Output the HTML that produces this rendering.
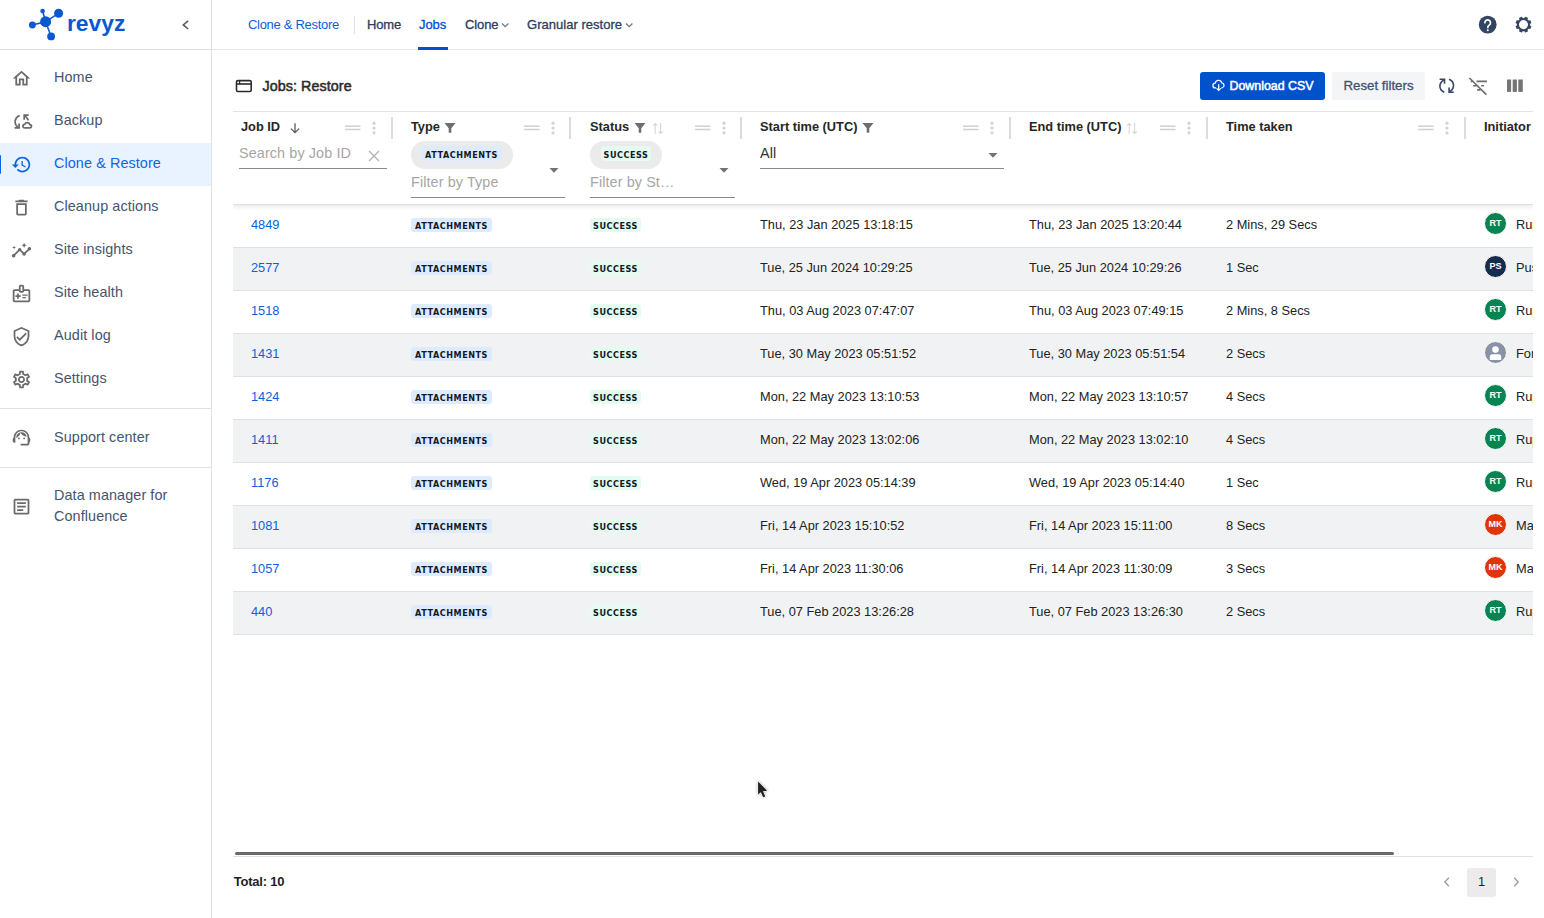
<!DOCTYPE html>
<html lang="en">
<head>
<meta charset="utf-8">
<title>Jobs: Restore</title>
<style>
*{box-sizing:border-box;margin:0;padding:0}
html,body{width:1544px;height:918px;overflow:hidden;background:#fff}
body{font-family:"Liberation Sans",sans-serif;color:#172b4d;position:relative}
.abs{position:absolute}
/* sidebar */
#side{position:absolute;left:0;top:0;width:212px;height:918px;border-right:1px solid #e0e0e0;background:#fff}
#logo{position:absolute;left:0;top:0;width:211px;height:50px;border-bottom:1px solid #e0e0e0}
.nav{position:absolute;left:0;width:211px;height:43px}
.nav .t{position:absolute;left:54px;top:0;line-height:41px;font-size:14.4px;color:#44546f;white-space:nowrap;letter-spacing:.09px}
.nav svg{position:absolute;left:10.8px;top:11px;width:21px;height:21px}
.nav.on{background:#e9f2ff}
.nav.on .t{color:#0c66e4}
.nav.on:before{content:"";position:absolute;left:0;top:12px;width:1.3px;height:19px;background:#0c66e4;border-radius:0 1px 1px 0}
.hr{position:absolute;left:0;width:211px;height:1px;background:#e0e0e0}
/* top */
#top{position:absolute;left:212px;top:0;right:0;height:50px;border-bottom:1px solid #e4e6ea;background:#fff}
.tn{position:absolute;top:0;line-height:50px;font-size:13px;white-space:nowrap;color:#2c3e5d;-webkit-text-stroke:.3px}

/* page head */
#ttl{position:absolute;left:262.5px;top:74px;line-height:24px;font-size:14.3px;font-weight:400;-webkit-text-stroke:.5px #2b2b2b;letter-spacing:.08px;color:#2b2b2b;white-space:nowrap}
.btn{position:absolute;top:72px;height:28px;border-radius:3px;font-size:12.6px;line-height:28px;white-space:nowrap}
/* table */
#hdr:before{content:"";position:absolute;left:0;top:0;width:100%;height:1px;background:#e2e3e8}
#tbl{position:absolute;left:233px;top:111px;width:1300px;height:746px;overflow:hidden}
#hdr{position:absolute;left:0;top:0;width:1300px;height:94px;background:#fff;border-bottom:1px solid #e0e0e0;box-shadow:0 2px 5px rgba(0,0,0,.09);z-index:2}
.hl{position:absolute;top:8px;line-height:16px;font-size:12.8px;font-weight:700;color:#262626;white-space:nowrap}
.sep{position:absolute;top:6px;width:2px;height:22px;background:#dcdcdc}
.ph{position:absolute;font-size:14.4px;color:#a6a6a6;white-space:nowrap;line-height:18px;letter-spacing:.1px}
.ul{position:absolute;height:1px;background:#8a8a8a}
.chip{position:absolute;top:30px;height:28px;border-radius:14px;background:#ebebeb}
.loz{position:absolute;height:14px;border-radius:3px;font-family:"DejaVu Sans","Liberation Sans",sans-serif;font-size:8.1px;font-weight:700;line-height:17px;color:#111827;text-align:center;letter-spacing:.55px;white-space:nowrap}
.loz.b{background:#deebff}
.loz.g{background:#e3fcef}
.row{position:absolute;left:0;width:1300px;height:43px;border-bottom:1px solid #e0e0e0;font-size:12.8px;color:#222;line-height:42px;white-space:nowrap}
.row.alt{background:#f1f2f4}
.row span{position:absolute;top:-1px}
.row .id{left:18px;color:#0c5fe0}
.row .st{left:527px}
.row .en{left:796px}
.row .tk{left:993px}
.row .nm{left:1283px}
.row .loz{top:13px}
.av{position:absolute;left:1251px;top:7px;width:23px;height:23px;border-radius:50%;border:1px solid #fff;color:#fff;font-size:9px;font-weight:700;text-align:center;line-height:21px;letter-spacing:0}
.av.rt{background:#078451}.av.ps{background:#172b4d}.av.mk{background:#de350b}.av.fu{background:#8993a5}
</style>
</head>
<body>
<div id="side">
 <div id="logo"><svg class="abs" style="left:26px;top:6px" width="40" height="38" viewBox="26 6 40 38"><g fill="#0b57d0" stroke="#0b57d0"><g stroke-width="1.500"><line x1="45.600" y1="21.700" x2="58.600" y2="13.300"/><line x1="45.600" y1="21.700" x2="32.400" y2="25"/><line x1="45.600" y1="21.700" x2="51.100" y2="36.400"/><line x1="45.600" y1="21.700" x2="42.600" y2="11"/></g><g stroke="none"><circle cx="45.600" cy="21.700" r="5.500"/><circle cx="58.600" cy="13.300" r="4.500"/><circle cx="32.400" cy="25" r="3.400"/><circle cx="51.100" cy="36.400" r="3.900"/><circle cx="42.600" cy="11" r="2.300"/></g></g></svg>
  <span class="abs" style="left:67px;top:9.4px;font-size:22.8px;font-weight:700;line-height:28px;color:#0b57d0;letter-spacing:0">revyz</span>
  <svg class="abs" style="left:176px;top:15px" width="18" height="18" viewBox="0 0 18 18"><path d="M12.200 5.800 7.300 9.900l4.900 4.100" fill="none" stroke="#5a5a5a" stroke-width="1.600"/></svg></div>
 <div class="nav" style="top:57px"><svg viewBox="0 0 24 24" fill="#6a6a6a" color="#6a6a6a"><path d="M12 5.69l5 4.5V18h-2v-6H9v6H7v-7.81l5-4.5M12 3L2 12h3v8h6v-6h2v6h6v-8h3L12 3z"/></svg><span class="t">Home</span></div>
 <div class="nav" style="top:100px"><svg style="left:4px;top:4px;width:40px;height:32px" viewBox="4 104 40 32"><g fill="none" stroke="#6a6a6a" stroke-width="1.750"><path d="M19.600 115.600C14.300 117.600 13.600 124.300 18.200 127.200"/><path d="M14.600 127.900h4.500v-4.500"/><path d="M28.700 115.200h-4.500v4.600"/><path d="M24.600 115.600C26.500 117 27.700 118.600 28.400 120.400"/><path d="M25 127.900c-2.600 0-2.800-3.300-.2-3.600.9-2.600 4.600-2.200 5 .4 2.400.2 2.100 3.200-.1 3.200z" stroke-linejoin="round"/></g></svg><span class="t">Backup</span></div>
 <div class="nav on" style="top:143px"><svg viewBox="0 0 24 24" fill="#0c66e4" color="#0c66e4"><path d="M13 3c-4.970 0-9 4.030-9 9H1l3.890 3.890.07.14L9 12H6c0-3.870 3.130-7 7-7s7 3.130 7 7-3.130 7-7 7c-1.930 0-3.680-.79-4.940-2.060l-1.420 1.420C8.270 19.990 10.510 21 13 21c4.970 0 9-4.030 9-9s-4.030-9-9-9zm-1 5v5l4.280 2.540.72-1.210-3.500-2.080V8H12z"/></svg><span class="t">Clone &amp; Restore</span></div>
 <div class="nav" style="top:186px"><svg viewBox="0 0 24 24" fill="#6a6a6a" color="#6a6a6a"><path d="M6 19c0 1.100.9 2 2 2h8c1.100 0 2-.9 2-2V7H6v12zM8 9h8v10H8V9zm7.500-5l-1-1h-5l-1 1H5v2h14V4z"/></svg><span class="t">Cleanup actions</span></div>
 <div class="nav" style="top:229px"><svg viewBox="0 0 24 24" fill="#6a6a6a" color="#6a6a6a"><path d="M21 8c-1.450 0-2.260 1.440-1.930 2.510l-3.550 3.560c-.3-.09-.74-.09-1.040 0l-2.550-2.550C12.270 10.450 11.460 9 10 9c-1.450 0-2.270 1.440-1.930 2.520l-4.560 4.550C2.440 15.740 1 16.550 1 18c0 1.100.9 2 2 2 1.450 0 2.260-1.440 1.930-2.510l4.550-4.560c.3.090.74.090 1.040 0l2.550 2.550C12.730 16.550 13.540 18 15 18c1.450 0 2.270-1.440 1.930-2.520l3.560-3.550c1.070.33 2.510-.48 2.510-1.930 0-1.100-.9-2-2-2z"/><path d="M15 9l.94-2.070L18 6l-2.060-.93L15 3l-.92 2.070L12 6l2.080.93z"/><path d="M3.500 11L4 9l2-.5L4 8l-.5-2L3 8l-2 .5L3 9z"/></svg><span class="t">Site insights</span></div>
 <div class="nav" style="top:272px"><svg viewBox="0 0 24 24" fill="#6a6a6a" color="#6a6a6a"><path d="M20 7h-5V4c0-1.100-.9-2-2-2h-2c-1.100 0-2 .9-2 2v3H4c-1.100 0-2 .9-2 2v11c0 1.100.9 2 2 2h16c1.100 0 2-.9 2-2V9c0-1.100-.9-2-2-2zm-9-3h2v5h-2V4zm9 16H4V9h5c0 1.100.9 2 2 2h2c1.100 0 2-.9 2-2h5v11z"/><path d="M11 16H9v2H7v-2H5v-2h2v-2h2v2h2v2zM13 14.500V13h6v1.500h-6zM13 17.500V16h4v1.500h-4z"/></svg><span class="t">Site health</span></div>
 <div class="nav" style="top:315px"><svg viewBox="0 0 24 24" fill="#6a6a6a" color="#6a6a6a"><path d="M12 1L3 5v6c0 5.550 3.840 10.740 9 12 5.160-1.260 9-6.450 9-12V5l-9-4zm7 10c0 4.520-2.980 8.690-7 9.930-4.020-1.240-7-5.410-7-9.930V6.300l7-3.110 7 3.110V11zm-11.590.59L6 13l4 4 8-8-1.410-1.420L10 14.170z"/></svg><span class="t">Audit log</span></div>
 <div class="nav" style="top:358px"><svg viewBox="0 0 24 24" fill="#6a6a6a" color="#6a6a6a"><path d="M19.430 12.980c.04-.32.07-.64.07-.98 0-.34-.03-.66-.07-.98l2.110-1.650c.19-.15.24-.42.12-.64l-2-3.460c-.09-.16-.26-.25-.44-.25-.06 0-.12.010-.17.030l-2.490 1c-.52-.4-1.080-.73-1.690-.98l-.38-2.650C14.460 2.180 14.250 2 14 2h-4c-.25 0-.46.18-.49.42l-.38 2.650c-.61.25-1.170.59-1.690.98l-2.490-1c-.06-.02-.12-.03-.18-.03-.17 0-.34.090-.43.250l-2 3.460c-.13.22-.07.49.12.64l2.110 1.650c-.04.32-.07.65-.07.980 0 .33.030.66.070.98l-2.110 1.650c-.19.15-.24.42-.12.64l2 3.460c.09.16.26.25.44.25.06 0 .12-.01.17-.03l2.490-1c.52.4 1.080.73 1.690.98l.38 2.650c.03.24.24.42.49.42h4c.25 0 .46-.18.49-.42l.38-2.650c.61-.25 1.170-.59 1.690-.98l2.490 1c.06.020.12.030.18.030.17 0 .34-.09.43-.25l2-3.460c.12-.22.07-.49-.12-.64l-2.110-1.650zm-1.980-1.710c.04.31.05.52.05.73 0 .21-.02.43-.05.73l-.14 1.130.89.7 1.080.84-.7 1.210-1.270-.51-1.040-.42-.9.68c-.43.32-.84.56-1.250.73l-1.060.43-.16 1.130-.2 1.350h-1.400l-.19-1.350-.16-1.130-1.060-.43c-.43-.18-.83-.41-1.230-.71l-.91-.7-1.060.43-1.270.51-.7-1.210 1.080-.84.89-.7-.14-1.130c-.03-.31-.05-.54-.05-.74s.02-.43.05-.73l.14-1.130-.89-.7-1.080-.84.7-1.210 1.270.51 1.040.42.9-.68c.43-.32.84-.56 1.250-.73l1.060-.43.16-1.130.2-1.350h1.390l.19 1.350.16 1.130 1.060.43c.43.18.83.41 1.230.71l.91.7 1.060-.43 1.270-.51.7 1.210-1.070.85-.89.7.14 1.130zM12 8c-2.210 0-4 1.790-4 4s1.790 4 4 4 4-1.790 4-4-1.790-4-4-4zm0 6c-1.100 0-2-.9-2-2s.9-2 2-2 2 .9 2 2-.9 2-2 2z"/></svg><span class="t">Settings</span></div>
 <div class="nav" style="top:417px"><svg style="top:10px" viewBox="0 0 24 24" fill="#6a6a6a" color="#6a6a6a"><path d="M21 12.220C21 6.730 16.740 3 12 3c-4.690 0-9 3.650-9 9.280-.6.340-1 .98-1 1.720v2c0 1.100.9 2 2 2h1v-6.100c0-3.870 3.130-7 7-7s7 3.130 7 7V19h-8v2h8c1.100 0 2-.9 2-2v-1.220c.59-.31 1-.92 1-1.640v-2.300c0-.7-.41-1.310-1-1.620z"/><circle cx="9" cy="13" r="1"/><circle cx="15" cy="13" r="1"/><path d="M18 11.030C17.520 8.180 15.040 6 12.050 6c-3.030 0-6.290 2.510-6.030 6.450 2.470-1.010 4.330-3.210 4.860-5.890 1.310 2.630 4 4.440 7.120 4.470z"/></svg><span class="t">Support center</span></div>
 <div class="hr" style="top:408px"></div>
 <div class="hr" style="top:467px"></div>
 <div class="nav" style="top:475px;height:62px"><svg viewBox="0 0 24 24" fill="#6a6a6a" style="top:21px"><path d="M19 5v14H5V5h14m0-2H5c-1.100 0-2 .9-2 2v14c0 1.100.9 2 2 2h14c1.100 0 2-.9 2-2V5c0-1.100-.9-2-2-2z"/><path d="M14 17H7v-2h7v2zm3-4H7v-2h10v2zm0-4H7V7h10v2z"/></svg><span class="t" style="line-height:21px;top:10px;white-space:normal;width:140px">Data manager for Confluence</span></div>

</div>
<div id="top">
 <span class="tn" style="left:36px;color:#0c5fd6;letter-spacing:-.3px;-webkit-text-stroke:0">Clone &amp; Restore</span>
 <div class="abs" style="left:142px;top:16px;width:1px;height:18px;background:#dcdfe4"></div>
 <span class="tn" style="left:155px;letter-spacing:-.15px">Home</span>
 <span class="tn" style="left:207px;color:#0052cc;letter-spacing:-.1px">Jobs</span>
 <div class="abs" style="left:206px;top:47px;width:30px;height:3px;background:#0052cc"></div>
 <span class="tn" style="left:253px;letter-spacing:-.1px">Clone</span>
 <svg class="abs" style="left:288px;top:20px" width="10" height="10" viewBox="0 0 10 10"><path d="M2 3.500 5.200 6.700 8.400 3.500" fill="none" stroke="#6b778c" stroke-width="1.300"/></svg>
 <span class="tn" style="left:315px;letter-spacing:.03px">Granular restore</span>
 <svg class="abs" style="left:412px;top:20px" width="10" height="10" viewBox="0 0 10 10"><path d="M2 3.500 5.200 6.700 8.400 3.500" fill="none" stroke="#6b778c" stroke-width="1.300"/></svg>
 <svg class="abs" style="left:1252px;top:4px" width="80" height="40" viewBox="1464 4 80 40"><circle cx="1487.700" cy="24.600" r="8.900" fill="#344563"/><g fill="none" stroke="#fff" stroke-width="1.700" stroke-linecap="round"><path d="M1484.900 22.700a2.800 2.800 0 1 1 4.300 2.400c-.9.600-1.400 1.100-1.400 2.300"/></g><circle cx="1487.750" cy="30.300" r="1.050" fill="#fff"/><circle cx="1523.500" cy="24.600" r="5.600" fill="none" stroke="#344563" stroke-width="2.100"/><g fill="#344563"><rect x="-1.700" y="-8" width="3.400" height="2.600" rx=".5" transform="translate(1523.500 24.600) rotate(22.5)"/><rect x="-1.700" y="-8" width="3.400" height="2.600" rx=".5" transform="translate(1523.500 24.600) rotate(67.5)"/><rect x="-1.700" y="-8" width="3.400" height="2.600" rx=".5" transform="translate(1523.500 24.600) rotate(112.5)"/><rect x="-1.700" y="-8" width="3.400" height="2.600" rx=".5" transform="translate(1523.500 24.600) rotate(157.5)"/><rect x="-1.700" y="-8" width="3.400" height="2.600" rx=".5" transform="translate(1523.500 24.600) rotate(202.5)"/><rect x="-1.700" y="-8" width="3.400" height="2.600" rx=".5" transform="translate(1523.500 24.600) rotate(247.5)"/><rect x="-1.700" y="-8" width="3.400" height="2.600" rx=".5" transform="translate(1523.500 24.600) rotate(292.5)"/><rect x="-1.700" y="-8" width="3.400" height="2.600" rx=".5" transform="translate(1523.500 24.600) rotate(337.5)"/></g></svg>
</div>
<div id="main">
 <svg class="abs" style="left:235px;top:78.500px" width="18" height="14" viewBox="0 0 18 14"><g fill="none" stroke="#2b2b2b" stroke-width="1.600"><rect x="1.500" y="1.600" width="14.700" height="10.900" rx="1.400"/><path d="M1.500 5h14.700"/><path d="M4.600 1.600v3.400" stroke-width="1.300"/></g></svg>
 <span id="ttl">Jobs: Restore</span>
 <div class="btn" style="left:1200px;width:125px;background:#0052cc;color:#fff;font-size:12.400px;-webkit-text-stroke:.5px #fff">
  <svg class="abs" style="left:11.600px;top:7.300px" width="13.400" height="13.400" viewBox="0 0 14 14"><path d="M4.300 9.300H3.600a2.500 2.500 0 0 1-.3-5 3.600 3.600 0 0 1 7-.3 2.700 2.700 0 0 1 .2 5.300H9.700" fill="none" stroke="#fff" stroke-width="1.300"/><path d="M7 5.500v6.300M4.800 9.800 7 12l2.200-2.200" fill="none" stroke="#fff" stroke-width="1.300"/></svg>
  <span class="abs" style="left:29.500px;top:0;letter-spacing:0">Download CSV</span></div>
 <div class="btn" style="left:1332px;width:93px;background:#f4f5f7;color:#42526e;text-align:center;letter-spacing:0;font-size:13.300px;-webkit-text-stroke:.3px #42526e">Reset filters</div>
 <svg class="abs" style="left:1430px;top:66px" width="104" height="40" viewBox="1430 66 104 40"><g fill="none" stroke="#344563" stroke-width="1.600"><path d="M1444.300 92.300C1438.400 89.500 1438.600 83.200 1443.800 79.800"/><path d="M1439.600 79.300h4.900v4.500"/><path d="M1449.100 79.200C1455 82 1454.800 88.300 1449.700 91.700"/><path d="M1453.700 92.200h-4.600v-4.700"/></g><g fill="none" stroke="#6b6b6b" stroke-width="1.600"><path d="M1469.400 78 1486.400 94.600"/><path d="M1470.800 81.400h1.500M1476.500 81.400h10.400M1473.100 85.700h4.100M1481.200 85.700h2.700M1477.200 89.900h3.300"/></g><g fill="#757575"><rect x="1507" y="79.500" width="4.100" height="12.400"/><rect x="1512.700" y="79.500" width="4.200" height="12.400"/><rect x="1518.300" y="79.500" width="4.500" height="12.400"/></g></svg>
 <div id="tbl">
  <div id="hdr"><span class="hl" style="left:8px">Job ID</span><svg class="abs" style="left:55px;top:10px" width="14" height="14" viewBox="0 0 14 14"><path d="M7 2.200v9.300M2.900 7.600 7 11.700 11.100 7.600" fill="none" stroke="#5c5c5c" stroke-width="1.300"/></svg><svg class="abs" style="left:112px;top:12px" width="16" height="10" viewBox="0 0 16 10"><path d="M0 3.200h15.500M0 6.600h15.500" stroke="#d0d0d0" stroke-width="1.500" fill="none"/></svg><svg class="abs" style="left:139px;top:10px" width="4" height="14" viewBox="0 0 4 14"><g fill="#d3d3d3"><circle cx="2" cy="2.200" r="1.600"/><circle cx="2" cy="7" r="1.600"/><circle cx="2" cy="11.800" r="1.600"/></g></svg><div class="sep" style="left:158px"></div><span class="ph" style="left:6px;top:33px">Search by Job ID</span><div class="ul" style="left:6px;top:57px;width:148px"></div><svg class="abs" style="left:135px;top:39px" width="12" height="12" viewBox="0 0 12 12"><path d="M1 1l10 10M11 1 1 11" stroke="#b2b2b2" stroke-width="1.300" fill="none"/></svg><span class="hl" style="left:178px">Type</span><svg class="abs" style="left:211px;top:11px" width="12" height="12" viewBox="0 0 12 12"><path d="M.5 1h11L7.300 6.200v4.600H4.700V6.200z" fill="#6e6e6e"/></svg><svg class="abs" style="left:291px;top:12px" width="16" height="10" viewBox="0 0 16 10"><path d="M0 3.200h15.500M0 6.600h15.500" stroke="#d0d0d0" stroke-width="1.500" fill="none"/></svg><svg class="abs" style="left:318px;top:10px" width="4" height="14" viewBox="0 0 4 14"><g fill="#d3d3d3"><circle cx="2" cy="2.200" r="1.600"/><circle cx="2" cy="7" r="1.600"/><circle cx="2" cy="11.800" r="1.600"/></g></svg><div class="sep" style="left:336px"></div><div class="chip" style="left:178px;width:102px"><div class="loz b" style="left:10px;top:5px;width:81px;height:15px;line-height:18px">ATTACHMENTS</div></div><span class="ph" style="left:178px;top:62px">Filter by Type</span><div class="ul" style="left:178px;top:86px;width:154px"></div><svg class="abs" style="left:316px;top:56px" width="10" height="7" viewBox="0 0 10 7"><path d="M.5 1h9L5 5.800z" fill="#737373"/></svg><span class="hl" style="left:357px">Status</span><svg class="abs" style="left:401px;top:11px" width="12" height="12" viewBox="0 0 12 12"><path d="M.5 1h11L7.300 6.200v4.600H4.700V6.200z" fill="#6e6e6e"/></svg><svg class="abs" style="left:419px;top:11px" width="12" height="12" viewBox="0 0 12 12"><g fill="none" stroke="#d6d6d6" stroke-width="1.100"><path d="M3.200 11.800V1.500M1 3.700 3.200 1.500 5.400 3.700"/><path d="M8.600 1v10.500M6.400 9.300 8.600 11.500 10.800 9.300"/></g></svg><svg class="abs" style="left:462px;top:12px" width="16" height="10" viewBox="0 0 16 10"><path d="M0 3.200h15.500M0 6.600h15.500" stroke="#d0d0d0" stroke-width="1.500" fill="none"/></svg><svg class="abs" style="left:489px;top:10px" width="4" height="14" viewBox="0 0 4 14"><g fill="#d3d3d3"><circle cx="2" cy="2.200" r="1.600"/><circle cx="2" cy="7" r="1.600"/><circle cx="2" cy="11.800" r="1.600"/></g></svg><div class="sep" style="left:507px"></div><div class="chip" style="left:357px;width:72px"><div class="loz g" style="left:11px;top:5px;width:50px;height:15px;line-height:18px">SUCCESS</div></div><span class="ph" style="left:357px;top:62px">Filter by St…</span><div class="ul" style="left:357px;top:86px;width:145px"></div><svg class="abs" style="left:486px;top:56px" width="10" height="7" viewBox="0 0 10 7"><path d="M.5 1h9L5 5.800z" fill="#737373"/></svg><span class="hl" style="left:527px">Start time (UTC)</span><svg class="abs" style="left:629px;top:11px" width="12" height="12" viewBox="0 0 12 12"><path d="M.5 1h11L7.300 6.200v4.600H4.700V6.200z" fill="#6e6e6e"/></svg><svg class="abs" style="left:730px;top:12px" width="16" height="10" viewBox="0 0 16 10"><path d="M0 3.200h15.500M0 6.600h15.500" stroke="#d0d0d0" stroke-width="1.500" fill="none"/></svg><svg class="abs" style="left:757px;top:10px" width="4" height="14" viewBox="0 0 4 14"><g fill="#d3d3d3"><circle cx="2" cy="2.200" r="1.600"/><circle cx="2" cy="7" r="1.600"/><circle cx="2" cy="11.800" r="1.600"/></g></svg><div class="sep" style="left:776px"></div><span class="ph" style="left:527px;top:33px;color:#333">All</span><div class="ul" style="left:527px;top:57px;width:244px"></div><svg class="abs" style="left:755px;top:41px" width="10" height="7" viewBox="0 0 10 7"><path d="M.5 1h9L5 5.800z" fill="#737373"/></svg><span class="hl" style="left:796px">End time (UTC)</span><svg class="abs" style="left:893px;top:11px" width="12" height="12" viewBox="0 0 12 12"><g fill="none" stroke="#d6d6d6" stroke-width="1.100"><path d="M3.200 11.800V1.500M1 3.700 3.200 1.500 5.400 3.700"/><path d="M8.600 1v10.500M6.400 9.300 8.600 11.500 10.800 9.300"/></g></svg><svg class="abs" style="left:927px;top:12px" width="16" height="10" viewBox="0 0 16 10"><path d="M0 3.200h15.500M0 6.600h15.500" stroke="#d0d0d0" stroke-width="1.500" fill="none"/></svg><svg class="abs" style="left:954px;top:10px" width="4" height="14" viewBox="0 0 4 14"><g fill="#d3d3d3"><circle cx="2" cy="2.200" r="1.600"/><circle cx="2" cy="7" r="1.600"/><circle cx="2" cy="11.800" r="1.600"/></g></svg><div class="sep" style="left:973px"></div><span class="hl" style="left:993px">Time taken</span><svg class="abs" style="left:1185px;top:12px" width="16" height="10" viewBox="0 0 16 10"><path d="M0 3.200h15.500M0 6.600h15.500" stroke="#d0d0d0" stroke-width="1.500" fill="none"/></svg><svg class="abs" style="left:1212px;top:10px" width="4" height="14" viewBox="0 0 4 14"><g fill="#d3d3d3"><circle cx="2" cy="2.200" r="1.600"/><circle cx="2" cy="7" r="1.600"/><circle cx="2" cy="11.800" r="1.600"/></g></svg><div class="sep" style="left:1231px"></div><span class="hl" style="left:1251px">Initiator</span></div>
  <div class="row" style="top:94px"><span class="id">4849</span><div class="loz b" style="left:178px;width:81px">ATTACHMENTS</div><div class="loz g" style="left:357px;width:51px">SUCCESS</div><span class="st">Thu, 23 Jan 2025 13:18:15</span><span class="en">Thu, 23 Jan 2025 13:20:44</span><span class="tk">2 Mins, 29 Secs</span><div class="av rt">RT</div><span class="nm">Rupesh T</span></div>
  <div class="row alt" style="top:137px"><span class="id">2577</span><div class="loz b" style="left:178px;width:81px">ATTACHMENTS</div><div class="loz g" style="left:357px;width:51px">SUCCESS</div><span class="st">Tue, 25 Jun 2024 10:29:25</span><span class="en">Tue, 25 Jun 2024 10:29:26</span><span class="tk">1 Sec</span><div class="av ps">PS</div><span class="nm">Pushkar S</span></div>
  <div class="row" style="top:180px"><span class="id">1518</span><div class="loz b" style="left:178px;width:81px">ATTACHMENTS</div><div class="loz g" style="left:357px;width:51px">SUCCESS</div><span class="st">Thu, 03 Aug 2023 07:47:07</span><span class="en">Thu, 03 Aug 2023 07:49:15</span><span class="tk">2 Mins, 8 Secs</span><div class="av rt">RT</div><span class="nm">Rupesh T</span></div>
  <div class="row alt" style="top:223px"><span class="id">1431</span><div class="loz b" style="left:178px;width:81px">ATTACHMENTS</div><div class="loz g" style="left:357px;width:51px">SUCCESS</div><span class="st">Tue, 30 May 2023 05:51:52</span><span class="en">Tue, 30 May 2023 05:51:54</span><span class="tk">2 Secs</span><div class="av fu"><svg style="position:absolute;left:3px;top:3px" width="15" height="15" viewBox="0 0 15 15"><circle cx="7.500" cy="4.600" r="3.300" fill="#fff"/><path d="M1.800 15v-3.200a2.500 2.500 0 0 1 2.500-2.500h6.400a2.500 2.500 0 0 1 2.500 2.500V15z" fill="#fff"/></svg></div><span class="nm">Former user</span></div>
  <div class="row" style="top:266px"><span class="id">1424</span><div class="loz b" style="left:178px;width:81px">ATTACHMENTS</div><div class="loz g" style="left:357px;width:51px">SUCCESS</div><span class="st">Mon, 22 May 2023 13:10:53</span><span class="en">Mon, 22 May 2023 13:10:57</span><span class="tk">4 Secs</span><div class="av rt">RT</div><span class="nm">Rupesh T</span></div>
  <div class="row alt" style="top:309px"><span class="id">1411</span><div class="loz b" style="left:178px;width:81px">ATTACHMENTS</div><div class="loz g" style="left:357px;width:51px">SUCCESS</div><span class="st">Mon, 22 May 2023 13:02:06</span><span class="en">Mon, 22 May 2023 13:02:10</span><span class="tk">4 Secs</span><div class="av rt">RT</div><span class="nm">Rupesh T</span></div>
  <div class="row" style="top:352px"><span class="id">1176</span><div class="loz b" style="left:178px;width:81px">ATTACHMENTS</div><div class="loz g" style="left:357px;width:51px">SUCCESS</div><span class="st">Wed, 19 Apr 2023 05:14:39</span><span class="en">Wed, 19 Apr 2023 05:14:40</span><span class="tk">1 Sec</span><div class="av rt">RT</div><span class="nm">Rupesh T</span></div>
  <div class="row alt" style="top:395px"><span class="id">1081</span><div class="loz b" style="left:178px;width:81px">ATTACHMENTS</div><div class="loz g" style="left:357px;width:51px">SUCCESS</div><span class="st">Fri, 14 Apr 2023 15:10:52</span><span class="en">Fri, 14 Apr 2023 15:11:00</span><span class="tk">8 Secs</span><div class="av mk">MK</div><span class="nm">Mark K</span></div>
  <div class="row" style="top:438px"><span class="id">1057</span><div class="loz b" style="left:178px;width:81px">ATTACHMENTS</div><div class="loz g" style="left:357px;width:51px">SUCCESS</div><span class="st">Fri, 14 Apr 2023 11:30:06</span><span class="en">Fri, 14 Apr 2023 11:30:09</span><span class="tk">3 Secs</span><div class="av mk">MK</div><span class="nm">Mark K</span></div>
  <div class="row alt" style="top:481px"><span class="id">440</span><div class="loz b" style="left:178px;width:81px">ATTACHMENTS</div><div class="loz g" style="left:357px;width:51px">SUCCESS</div><span class="st">Tue, 07 Feb 2023 13:26:28</span><span class="en">Tue, 07 Feb 2023 13:26:30</span><span class="tk">2 Secs</span><div class="av rt">RT</div><span class="nm">Rupesh T</span></div>
  <div class="abs" style="left:2px;top:741px;width:1159px;height:3px;border-radius:1.500px;background:#696969"></div>
  <div class="abs" style="left:0;top:745px;width:1300px;height:1px;background:#dfe1e6"></div>
 </div>
 <span class="abs" style="left:233.700px;top:872px;font-size:13px;font-weight:700;line-height:20px;color:#1f1f1f;letter-spacing:-.2px">Total: 10</span>
 <svg class="abs" style="left:1441px;top:876px" width="12" height="12" viewBox="0 0 12 12"><path d="M7.800 1.700 3.800 6l4 4.300" fill="none" stroke="#9a9a9a" stroke-width="1.300"/></svg>
 <div class="abs" style="left:1467px;top:868px;width:29px;height:29px;border-radius:3px;background:#ebebeb;text-align:center;line-height:27px;font-size:12.800px;color:#1f1f1f">1</div>
 <svg class="abs" style="left:1510px;top:876px" width="12" height="12" viewBox="0 0 12 12"><path d="M4.200 1.700 8.200 6l-4 4.300" fill="none" stroke="#9a9a9a" stroke-width="1.300"/></svg>
 <svg class="abs" style="left:740px;top:770px" width="50" height="40" viewBox="740 770 50 40"><path d="M758.100 781.600V794.400L760.800 792.200 763.200 797.300 765.300 796.400 763 791.300 767.200 790.700z" fill="#222" stroke="#fff" stroke-width="1.300" stroke-linejoin="round" paint-order="stroke" style="filter:drop-shadow(0 .5px .8px rgba(0,0,0,.35))"/></svg>
</div>
</body>
</html>
